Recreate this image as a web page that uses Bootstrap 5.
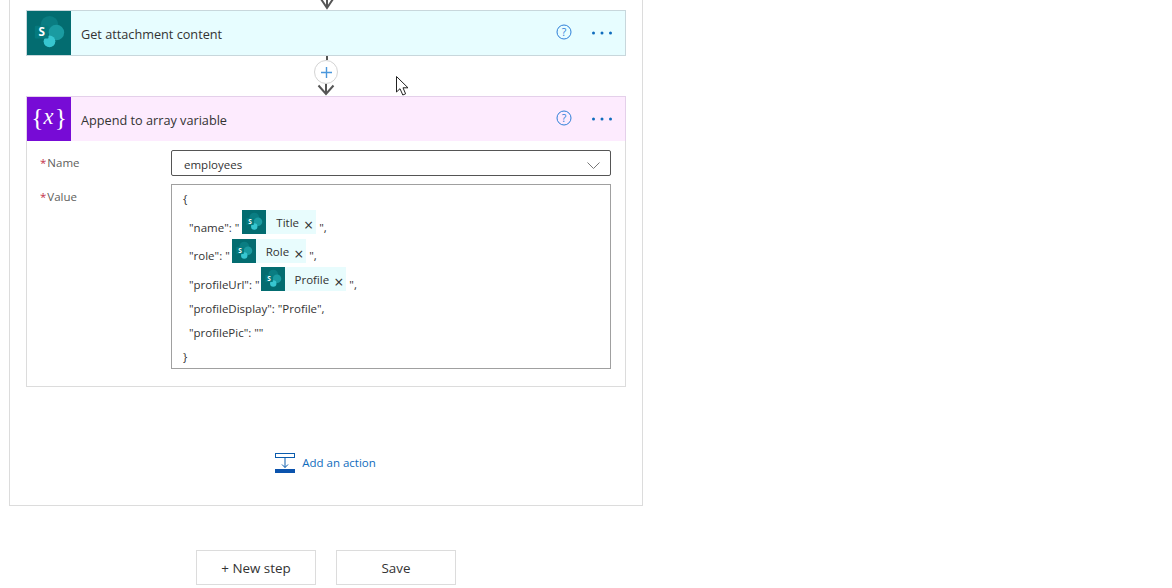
<!DOCTYPE html>
<html lang="en">
<head>
<meta charset="utf-8">
<title>Flow</title>
<link href="https://cdn.jsdelivr.net/npm/bootstrap@5.3.0/dist/css/bootstrap.min.css" rel="stylesheet">
<style>
html,body{height:588px;overflow:hidden;background:#fff}
body{font-family:"Open Sans","Noto Sans",sans-serif;font-size:12px;color:#333;padding-left:9px}
.scope-box{width:634px;height:506px;border:1px solid #dcdcdc;border-top:0;padding-left:16px}
.top-arrow{height:10px;width:602px}
.top-arrow svg{display:block;margin:0 auto}
.step{width:600px}
.step-head{height:46px;border:1px solid #c8d7dc;background:#e7fdff;color:#333;font-size:12.7px}
.step-head.purple{height:45px;background:#fdebfe;border-color:#e4d0ea;border-bottom:0}
.step-ico{width:44px;height:44px;flex:none}
.step-title{margin-left:10px;padding-top:3px}
.purple .step-title{padding-top:4px}
.head-tools{gap:20px;padding-right:13px}
.help-ic{margin-top:-2px}
.conn{height:40px;width:600px;position:relative}
.conn .stub{width:2px;height:4px;background:#555;margin:0 auto;position:relative;left:1px}
.conn .plus{position:absolute;left:288px;top:4px;width:24px;height:24px;border:1px solid #d4d4d4;border-radius:50%;background:#fff}
.conn svg.arr{position:absolute;left:291px;top:28px}
.step-body{width:600px;height:246px;border:1px solid #dcdcdc;border-top:0;padding:9px 14px 0 13px}
.fld-label{width:131px;color:#605e5c;font-size:11.5px;flex:none;line-height:14px;padding-top:6px}
.fld-label i{color:#c4314b;font-style:normal;margin-right:1px}
.fld-label.second{margin-top:8px}
.sel-box{width:440px;height:26px;border:1px solid #555;border-radius:2px;padding:4px 10px 0 12px;font-size:11.5px;color:#333}
.val-box{width:440px;height:185px;border:1px solid #a0a0a0;padding:5px 0 0 11px;font-size:11.5px;color:#333;margin-top:8px}
.code-l{line-height:18px;display:flex;align-items:flex-end;white-space:pre}
.code-l.ind{padding-left:6px}
.code-l.tall{height:27px;margin-top:2px}
.code-l.mid{height:26px;margin-top:2px}
.code-l.gapped{margin-top:6px}
.tk{display:inline-flex;align-self:flex-start;height:24px;background:#e8fcfd;align-items:flex-start}
.tk.ma{margin-left:3px}
.tk.mb{margin-left:2px}
.tk.mc{margin-left:1px}
.tk svg{display:block;flex:none}
.tk-t{padding-left:10px;line-height:17px;padding-top:4px}
.tk-x{font-size:16px;line-height:16px;margin-left:5px;margin-right:3px;margin-top:7px}
.add-act{color:#0f6cbd;font-size:11.5px;gap:7px;height:22px;width:600px;margin-top:65px}
.add-act svg{margin:-1px 0 0 -1px}
.bot-row{gap:20px;margin:44px 0 0 187px}
.bot-btn{width:120px;height:35px;border:1px solid #dcdcdc;border-radius:0;font-size:13.4px;color:#333;background:#fff;padding:1px 0 0;line-height:33px}
.ptr{position:absolute;left:396px;top:76px}
</style>
</head>
<body>
<div class="scope-box d-flex flex-column">
  <div class="top-arrow"><svg width="20" height="10" viewBox="0 0 20 10"><path d="M2 -4L10 8L18 -4M10 -4V8" fill="none" stroke="#555" stroke-width="2"/></svg></div>
  <div class="step">
    <div class="step-head d-flex align-items-center">
      <svg class="step-ico" viewBox="0 0 45 45"><rect width="45" height="45" fill="#036c70"/><circle cx="23" cy="14" r="9" fill="#0a7d82"/><circle cx="30" cy="22" r="8" fill="#1a9ba1"/><circle cx="23" cy="31" r="6" fill="#37c6d0"/><rect x="8" y="15" width="14" height="13" rx="1" fill="#047a7e"/><text x="15" y="26" font-family="Open Sans" font-size="12" font-weight="700" text-anchor="middle" fill="#fff">S</text></svg>
      <span class="step-title">Get attachment content</span>
      <span class="ms-auto d-flex align-items-center head-tools">
        <svg class="help-ic" width="16" height="16" viewBox="0 0 16 16"><circle cx="8" cy="8" r="7" fill="none" stroke="#2d7fd8" stroke-width="1"/><text x="8" y="12" font-family="Open Sans" font-size="10.5" text-anchor="middle" fill="#2d7fd8">?</text></svg>
        <svg width="20" height="4" viewBox="0 0 20 4"><circle cx="1.5" cy="2" r="1.5" fill="#0f6cbd"/><circle cx="10" cy="2" r="1.5" fill="#0f6cbd"/><circle cx="18.5" cy="2" r="1.5" fill="#0f6cbd"/></svg>
      </span>
    </div>
  </div>
  <div class="conn">
    <div class="stub"></div>
    <div class="plus d-flex align-items-center justify-content-center"><svg width="11" height="11" viewBox="0 0 11 11"><path d="M5.5 0V11M0 5.5H11" stroke="#4a97dc" stroke-width="1.4"/></svg></div>
    <svg class="arr" width="18" height="12" viewBox="0 0 18 12"><path d="M1.5 1.5L9 10L16.5 1.5M9 0V10" fill="none" stroke="#555" stroke-width="2"/></svg>
  </div>
  <div class="step">
    <div class="step-head purple d-flex align-items-center">
      <svg class="step-ico" viewBox="0 0 45 45"><rect width="45" height="45" fill="#770bd6"/><text x="10.500" y="30" font-family="Liberation Serif" font-size="26" text-anchor="middle" fill="#fff">{</text><text x="22" y="28" font-family="Liberation Serif" font-style="italic" font-size="23" text-anchor="middle" fill="#fff">x</text><text x="34.500" y="30" font-family="Liberation Serif" font-size="26" text-anchor="middle" fill="#fff">}</text></svg>
      <span class="step-title">Append to array variable</span>
      <span class="ms-auto d-flex align-items-center head-tools">
        <svg class="help-ic" width="16" height="16" viewBox="0 0 16 16"><circle cx="8" cy="8" r="7" fill="none" stroke="#2d7fd8" stroke-width="1"/><text x="8" y="12" font-family="Open Sans" font-size="10.5" text-anchor="middle" fill="#2d7fd8">?</text></svg>
        <svg width="20" height="4" viewBox="0 0 20 4"><circle cx="1.5" cy="2" r="1.5" fill="#0f6cbd"/><circle cx="10" cy="2" r="1.5" fill="#0f6cbd"/><circle cx="18.5" cy="2" r="1.5" fill="#0f6cbd"/></svg>
      </span>
    </div>
    <div class="step-body">
      <div class="d-flex">
        <div class="fld-label"><i>*</i>Name</div>
        <div class="sel-box d-flex justify-content-between align-items-center"><span>employees</span><svg width="13" height="7" viewBox="0 0 13 7"><path d="M.5 .5L6.500 6.500L12.500 .5" fill="none" stroke="#777" stroke-width="1"/></svg></div>
      </div>
      <div class="d-flex">
        <div class="fld-label second"><i>*</i>Value</div>
        <div class="val-box">
          <div class="code-l">{</div>
          <div class="code-l ind tall"><span>"name": "</span><span class="tk ma"><svg width="24" height="24" viewBox="0 0 45 45"><rect width="45" height="45" fill="#036c70"/><circle cx="23" cy="14" r="9" fill="#0a7d82"/><circle cx="30" cy="22" r="8" fill="#1a9ba1"/><circle cx="23" cy="31" r="6" fill="#37c6d0"/><rect x="8" y="15" width="14" height="13" rx="1" fill="#047a7e"/><text x="15" y="26" font-family="Open Sans" font-size="12" font-weight="700" text-anchor="middle" fill="#fff">S</text></svg><span class="tk-t">Title</span><span class="tk-x">&#215;</span></span><span> ",</span></div>
          <div class="code-l ind mid"><span>"role": "</span><span class="tk mb"><svg width="24" height="24" viewBox="0 0 45 45"><rect width="45" height="45" fill="#036c70"/><circle cx="23" cy="14" r="9" fill="#0a7d82"/><circle cx="30" cy="22" r="8" fill="#1a9ba1"/><circle cx="23" cy="31" r="6" fill="#37c6d0"/><rect x="8" y="15" width="14" height="13" rx="1" fill="#047a7e"/><text x="15" y="26" font-family="Open Sans" font-size="12" font-weight="700" text-anchor="middle" fill="#fff">S</text></svg><span class="tk-t">Role</span><span class="tk-x">&#215;</span></span><span> ",</span></div>
          <div class="code-l ind tall"><span>"profileUrl": "</span><span class="tk mc"><svg width="24" height="24" viewBox="0 0 45 45"><rect width="45" height="45" fill="#036c70"/><circle cx="23" cy="14" r="9" fill="#0a7d82"/><circle cx="30" cy="22" r="8" fill="#1a9ba1"/><circle cx="23" cy="31" r="6" fill="#37c6d0"/><rect x="8" y="15" width="14" height="13" rx="1" fill="#047a7e"/><text x="15" y="26" font-family="Open Sans" font-size="12" font-weight="700" text-anchor="middle" fill="#fff">S</text></svg><span class="tk-t">Profile</span><span class="tk-x">&#215;</span></span><span> ",</span></div>
          <div class="code-l ind gapped">"profileDisplay": "Profile",</div>
          <div class="code-l ind gapped">"profilePic": ""</div>
          <div class="code-l gapped">}</div>
        </div>
      </div>
    </div>
  </div>
  <div class="d-flex justify-content-center align-items-center add-act">
    <svg width="20" height="20" viewBox="0 0 20 20"><rect x=".5" y=".5" width="19" height="4" fill="#fff" stroke="#0b5cad"/><path d="M10 5V14.500M7 11.500L10 14.500L13 11.500" fill="none" stroke="#0b5cad"/><rect y="16" width="20" height="4" fill="#0b53ad"/></svg>
    <span>Add an action</span>
  </div>
</div>
<div class="d-flex bot-row">
  <button type="button" class="btn bot-btn">+ New step</button>
  <button type="button" class="btn bot-btn">Save</button>
</div>
<svg class="ptr" width="14" height="20" viewBox="0 0 14 20"><path d="M.5 .5V16L4 12.700L6.800 19L9.600 17.800L7 11.800H12Z" fill="#fff" stroke="#222"/></svg>
</body>
</html>
